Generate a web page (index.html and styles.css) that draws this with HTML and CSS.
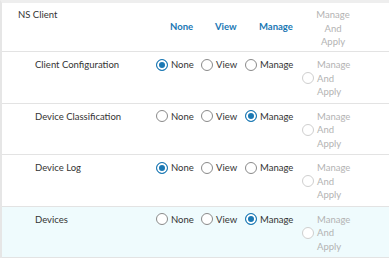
FILE: index.html
```html
<!DOCTYPE html>
<html lang="en">
<head>
    <meta charset="UTF-8">
    <meta name="viewport" content="width=device-width, initial-scale=1.0">
    <title>Permissions</title>
    <link rel="stylesheet" href="styles.css">
</head>
<body>
    <div class="perm-table">
        <div class="perm-row perm-head">
            <div class="perm-name">NS Client</div>
            <div class="head-cell">None</div>
            <div class="head-cell">View</div>
            <div class="head-cell">Manage</div>
            <div class="head-cell head-disabled">Manage And Apply</div>
        </div>

        <div class="perm-row">
            <div class="perm-name">Client Configuration</div>
            <label class="opt"><span class="radio checked"></span>None</label>
            <label class="opt"><span class="radio"></span>View</label>
            <label class="opt"><span class="radio"></span>Manage</label>
            <label class="opt opt-disabled"><span class="radio"></span><span class="opt-text">Manage And Apply</span></label>
        </div>

        <div class="perm-row">
            <div class="perm-name">Device Classification</div>
            <label class="opt"><span class="radio"></span>None</label>
            <label class="opt"><span class="radio"></span>View</label>
            <label class="opt"><span class="radio checked"></span>Manage</label>
            <label class="opt opt-disabled"><span class="radio"></span><span class="opt-text">Manage And Apply</span></label>
        </div>

        <div class="perm-row">
            <div class="perm-name">Device Log</div>
            <label class="opt"><span class="radio checked"></span>None</label>
            <label class="opt"><span class="radio"></span>View</label>
            <label class="opt"><span class="radio"></span>Manage</label>
            <label class="opt opt-disabled"><span class="radio"></span><span class="opt-text">Manage And Apply</span></label>
        </div>

        <div class="perm-row perm-active">
            <div class="perm-name">Devices</div>
            <label class="opt"><span class="radio"></span>None</label>
            <label class="opt"><span class="radio"></span>View</label>
            <label class="opt"><span class="radio checked"></span>Manage</label>
            <label class="opt opt-disabled"><span class="radio"></span><span class="opt-text">Manage And Apply</span></label>
        </div>
    </div>
</body>
</html>
```

FILE: styles.css
```css
body {
    margin: 0;
    font-family: Lato, "Liberation Sans", sans-serif;
    font-size: 9.5px;
    color: #333;
    background: white;
}
.perm-table {
    border-top: 3px solid #eeeeee;
    border-left: 2px solid #e6e6e6;
}
.perm-row {
    display: grid;
    grid-template-columns: 154px 45px 44px 57px 1fr;
    align-items: start;
    height: 51.5px;
    box-sizing: border-box;
    padding-top: 6px;
    line-height: 13.5px;
    border-bottom: 1px solid #e3e3e3;
}
.perm-head {
    height: 49px;
    padding-top: 5px;
}
.perm-active {
    background: #effbfd;
}
.perm-name {
    padding-left: 33px;
}
.perm-head .perm-name {
    padding-left: 16px;
}
.head-cell {
    align-self: center;
    padding-left: 14px;
    margin-top: -5px;
    color: #1a78b4;
    font-weight: bold;
}
.head-disabled {
    align-self: start;
    margin-top: 0;
    width: 36px;
    padding-left: 13px;
    text-align: center;
    color: #b3b3b3;
    font-weight: normal;
}
.opt {
    display: flex;
    align-items: center;
    white-space: nowrap;
}
.opt-disabled {
    color: #b3b3b3;
}
.opt-text {
    white-space: normal;
    width: 36px;
}
.radio {
    width: 12px;
    height: 12px;
    box-sizing: border-box;
    border: 1px solid #8a8a8a;
    border-radius: 50%;
    background: white;
    margin-right: 3px;
    flex-shrink: 0;
}
.radio.checked {
    border-color: #1a78b4;
    background: #1a78b4;
    box-shadow: inset 0 0 0 2px white;
}
.opt-disabled .radio {
    border-color: #cfcfcf;
}
```
